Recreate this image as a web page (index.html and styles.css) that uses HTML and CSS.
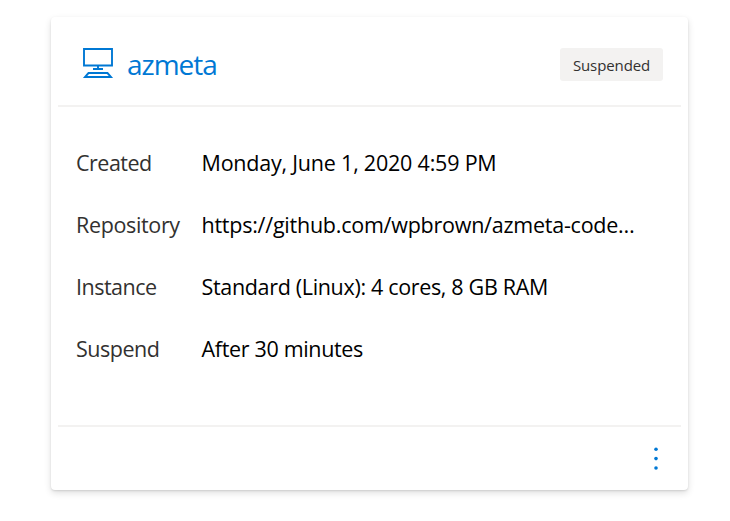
FILE: index.html
```html
<!DOCTYPE html>
<html lang="en">
<head>
<meta charset="utf-8">
<title>azmeta</title>
<link rel="stylesheet" href="styles.css">
</head>
<body>
<article class="card">
  <header class="header">
    <svg class="icon" width="32" height="32" viewBox="0 0 32 32" fill="none" stroke="#0078d4" stroke-width="1.9"><path d="M2 2h28v16.5H2zM16 19v3M11 22h10M6.5 26h19l3.5 4H3z"/></svg>
    <h1 class="title">azmeta</h1>
    <span class="badge">Suspended</span>
  </header>
  <dl class="details">
    <dt>Created</dt>
    <dd class="date">Monday, June 1, 2020 4:59 PM</dd>
    <dt class="repository">Repository</dt>
    <dd class="url">https://github.com/wpbrown/azmeta-code…</dd>
    <dt>Instance</dt>
    <dd>Standard (Linux): 4 cores, 8 GB RAM</dd>
    <dt>Suspend</dt>
    <dd>After 30 minutes</dd>
  </dl>
  <footer class="footer">
    <svg width="6" height="26" viewBox="0 0 6 26" fill="#0078d4"><circle cx="3" cy="3.2" r="1.8"/><circle cx="3" cy="12.6" r="1.8"/><circle cx="3" cy="22" r="1.8"/></svg>
  </footer>
</article>
</body>
</html>
```
FILE: styles.css
```css
* { box-sizing: border-box; }
body { margin: 0; min-height: 521px; padding: 17px 42px 0 51px; background: #fff; font-family: "Open Sans", "Noto Sans", sans-serif; }
.card { height: 473px; padding: 0 7px; background: #fff; border-radius: 4px; box-shadow: 0 3px 7px rgba(0,0,0,.13), 0 1px 2px rgba(0,0,0,.11); display: flex; flex-direction: column; }
.header { height: 90px; border-bottom: 2px solid #f3f2f1; display: flex; align-items: center; padding: 6px 18px 0 24px; }
.icon { display: block; margin-top: -2px; }
.title { margin: 0 0 0 13px; font-size: 28px; line-height: 36px; font-weight: 400; color: #0078d4; letter-spacing: -1px; }
.badge { margin-left: auto; width: 103px; height: 33px; line-height: 34px; text-align: center; border-radius: 3px; background: #f3f2f1; font-size: 15px; letter-spacing: -0.1px; color: #323130; }
.details { margin: 0; height: 318px; padding: 25px 18px 0 18px; display: grid; grid-template-columns: 125.5px 1fr; grid-auto-rows: 62px; font-size: 21.5px; line-height: 61px; white-space: nowrap; }
.details dt { color: #323130; letter-spacing: -0.5px; }
.details .repository { letter-spacing: -0.35px; }
.details dd { margin: 0; color: #000; letter-spacing: -0.33px; }
.details .date { letter-spacing: -0.21px; }
.details .url { letter-spacing: -0.24px; }
.footer { flex: 1; border-top: 2px solid #f3f2f1; display: flex; justify-content: flex-end; align-items: center; padding-right: 22px; }
```
